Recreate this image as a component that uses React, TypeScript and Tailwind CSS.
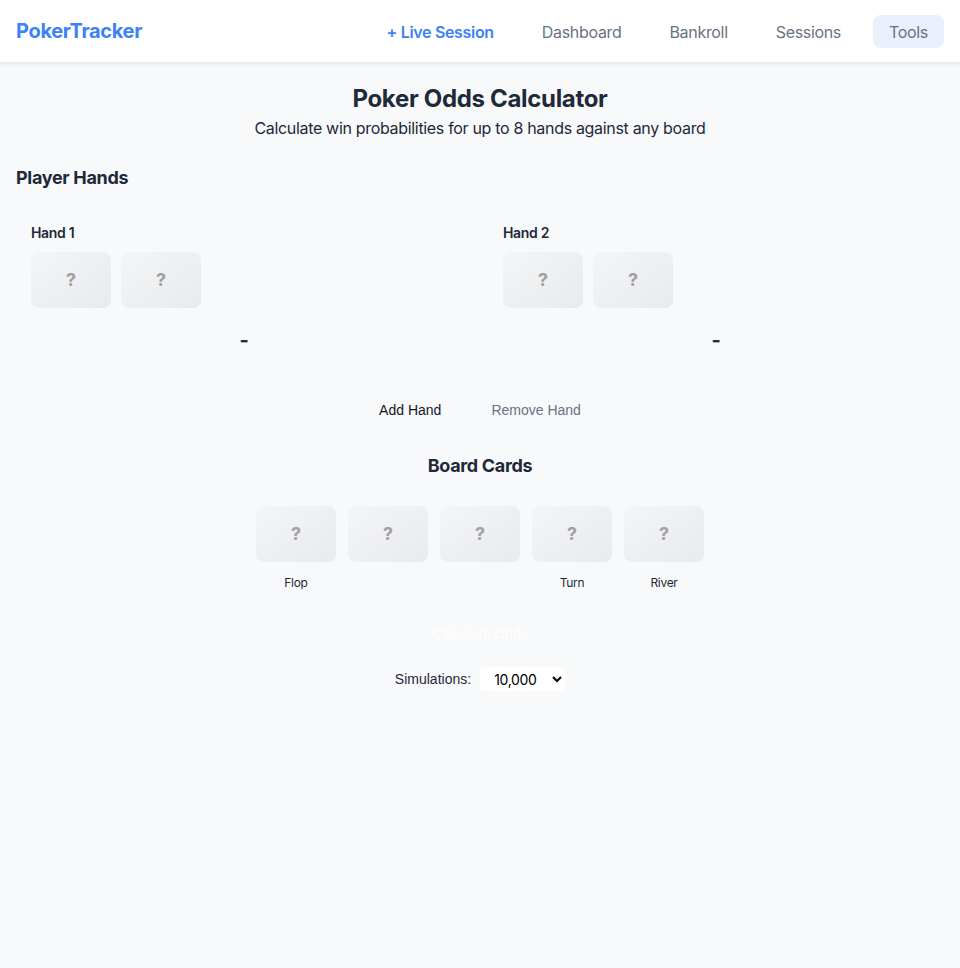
import React from "react";

const sans = "font-['Inter','Liberation_Sans',sans-serif] tracking-[-0.02em]";

const Card = () => (
  <div className="w-20 h-14 rounded-lg bg-gradient-to-br from-[#f4f5f7] to-[#e8eaed] flex items-center justify-center">
    <span className="text-lg font-bold text-[#a0a0a3]">?</span>
  </div>
);

const HandBox = ({ label }: { label: string }) => (
  <div className="p-[15px]">
    <div className="text-sm font-semibold text-gray-800 mb-[9px] leading-5">{label}</div>
    <div className="flex gap-[10px]">
      <Card />
      <Card />
    </div>
    <div className="text-center text-xl font-bold text-gray-800 mt-[18px] leading-7">-</div>
  </div>
);

const navItems = ["Dashboard", "Bankroll", "Sessions"];

export default function App() {
  const boardLabels = ["Flop", "", "", "Turn", "River"];
  return (
    <div className={`min-h-[968px] bg-[#f8f9fb] ${sans}`}>
      <header className="h-[62px] bg-white shadow-[0_2px_4px_rgba(0,0,0,0.08)] flex items-center justify-between px-4">
        <div className="text-xl font-bold text-[#3b82f6]">PokerTracker</div>
        <nav className="flex items-center gap-4 pt-[1px]">
          <a className="px-4 h-[33px] flex items-center text-base font-semibold text-[#3b82f6]">+ Live Session</a>
          {navItems.map((n) => (
            <a key={n} className="px-4 h-[33px] flex items-center text-base text-gray-500">
              {n}
            </a>
          ))}
          <a className="px-4 h-[33px] flex items-center text-base text-gray-500 bg-[#eaf0fb] rounded-lg">Tools</a>
        </nav>
      </header>

      <main className="px-4">
        <div className="text-center pt-[21px]">
          <h1 className="text-2xl font-bold text-gray-800 leading-8">Poker Odds Calculator</h1>
          <p className="text-base text-gray-800 leading-6 mt-[1px]">
            Calculate win probabilities for up to 8 hands against any board
          </p>
        </div>

        <h2 className="text-lg font-bold text-gray-800 mt-[24px] leading-7">Player Hands</h2>

        <div className="grid grid-cols-2 gap-4 mt-[16px]">
          <HandBox label="Hand 1" />
          <HandBox label="Hand 2" />
        </div>

        <div className="flex justify-center gap-[18px] mt-[25px] font-['Liberation_Sans',sans-serif] tracking-normal text-sm">
          <button className="px-4 py-[6px] text-gray-900">Add Hand</button>
          <button className="px-4 py-[6px] text-gray-500">Remove Hand</button>
        </div>

        <h2 className="text-lg font-bold text-gray-800 text-center mt-[26px] leading-7">Board Cards</h2>

        <div className="flex justify-center gap-3 mt-[26px]">
          {boardLabels.map((l, i) => (
            <div key={i} className="flex flex-col items-center">
              <Card />
              <div className="text-xs text-gray-800 mt-[13px] h-4 leading-4">{l}</div>
            </div>
          ))}
        </div>

        <div className="flex justify-center mt-[25px]">
          <button className="px-6 py-2 text-sm text-white font-['Liberation_Sans',sans-serif] tracking-normal bg-[#f8f9fb]">
            Calculate Odds
          </button>
        </div>

        <div className="flex justify-center items-center gap-[9px] mt-[15px] text-sm">
          <span className="text-gray-800 font-['Liberation_Sans',sans-serif] tracking-normal">Simulations:</span>
          <select className="bg-white rounded px-[10px] h-6 w-[85px] text-sm text-black">
            <option>10,000</option>
          </select>
        </div>
      </main>
    </div>
  );
}
